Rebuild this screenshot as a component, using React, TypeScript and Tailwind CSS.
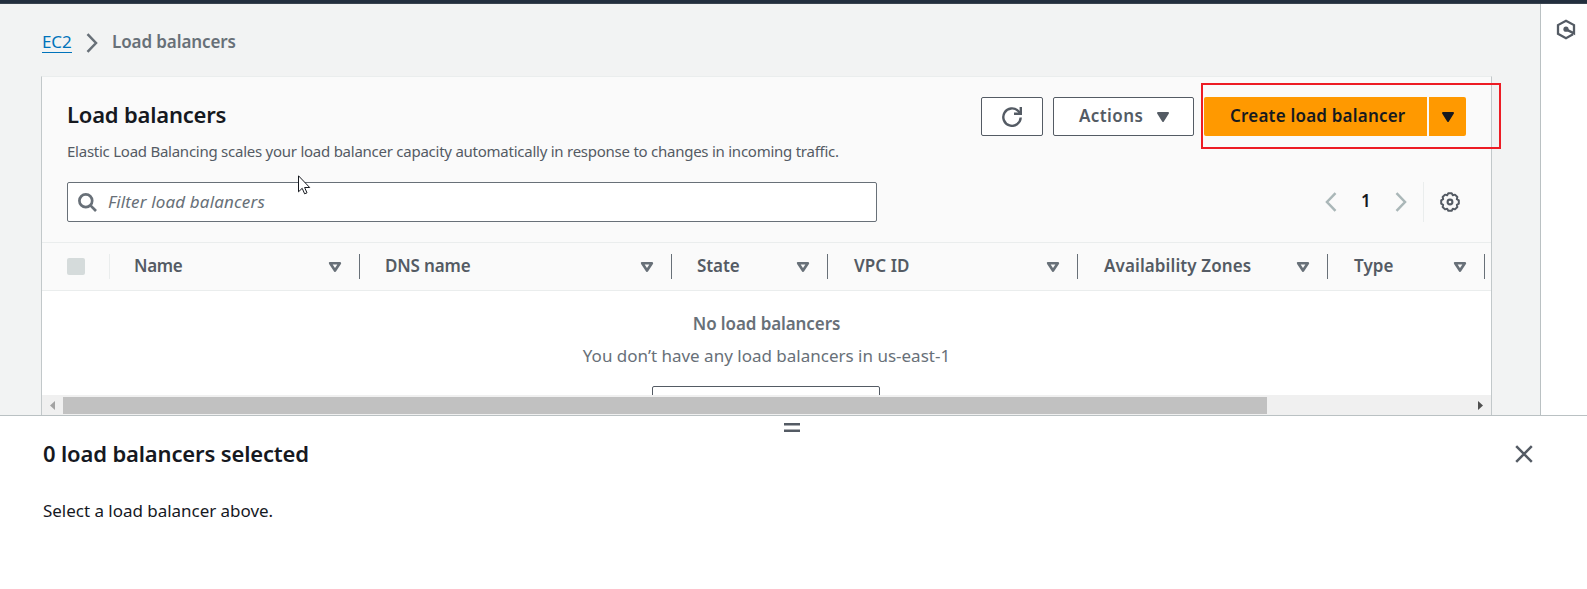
import React from "react";

type Column = { label: string; cell: string; text: string };

const columns: Column[] = [
  { label: "Name", cell: "w-[250px]", text: "-ml-px tracking-[-0.3px]" },
  { label: "DNS name", cell: "w-[312px]", text: "tracking-[-0.15px]" },
  { label: "State", cell: "w-[156px]", text: "tracking-[-0.1px]" },
  { label: "VPC ID", cell: "w-[250px]", text: "ml-px tracking-[0.05px]" },
  { label: "Availability Zones", cell: "w-[250px]", text: "ml-px tracking-[0.1px]" },
  { label: "Type", cell: "w-[157px]", text: "ml-px tracking-[0.1px]" },
];

function Chevron({ className, flip = false }: { className: string; flip?: boolean }) {
  return (
    <svg viewBox="0 0 12 20" className={className} fill="none" stroke="currentColor" strokeWidth="2.5">
      <path d={flip ? "M10.5 1.2 2 10l8.5 8.8" : "M1.5 1.2 10 10l-8.5 8.8"} />
    </svg>
  );
}

function SolidCaret({ className }: { className: string }) {
  return (
    <svg viewBox="0 0 14 12" className={className} fill="currentColor" stroke="currentColor" strokeWidth="2" strokeLinejoin="round">
      <path d="M2 2h10L7 10z" />
    </svg>
  );
}

function SortCaret() {
  return (
    <svg viewBox="0 0 14 12" className="h-3 w-3.5 text-[#687078]" fill="none" stroke="currentColor" strokeWidth="2.7" strokeLinejoin="round">
      <path d="M2.2 2.25h9.6L7 9.5z" />
    </svg>
  );
}

function Breadcrumbs() {
  return (
    <nav className="flex h-[72px] items-center pt-[5px] pl-[42px] text-[17px] leading-6">
      <a className="h-[21px] w-[30px] border-b border-[#0073bb] leading-[19px] tracking-[-0.1px] whitespace-nowrap text-[#0073bb]">EC2</a>
      <Chevron className="ml-3.5 h-5 w-3 text-[#687078]" />
      <span className="-mt-0.5 ml-3.5 font-semibold tracking-[-0.1px] text-[#687078]">Load balancers</span>
    </nav>
  );
}

function HeaderActions() {
  return (
    <div className="relative flex h-[39px] pr-[25px] text-[17px] font-semibold">
      <button className="flex w-[62px] items-center justify-center rounded-[2px] border border-[#545b64] bg-white text-[#545b64]">
        <svg viewBox="0 0 20 20" className="h-5 w-5" fill="none" stroke="currentColor" strokeWidth="2.4">
          <path d="M18.7 10.5A8.7 8.7 0 1 1 16.2 4l2 2.2" />
          <path d="M18.8 0v6.8H12" />
        </svg>
      </button>
      <button className="ml-2.5 flex w-[141px] items-center rounded-[2px] border border-[#545b64] bg-white pl-[25px] text-[#545b64]">
        <span className="-mt-px w-[77px] text-left tracking-[0.4px]">Actions</span>
        <SolidCaret className="h-3 w-3.5" />
      </button>
      <button className="ml-2.5 w-[223px] rounded-l-[2px] bg-[#ff9900] pb-px pl-[26px] text-left tracking-[0.2px] whitespace-nowrap text-[#16191f]">Create load balancer</button>
      <button className="ml-0.5 flex w-[37px] items-center justify-center rounded-r-[2px] bg-[#ff9900] text-[#16191f]">
        <SolidCaret className="h-3 w-3.5" />
      </button>
      <div className="pointer-events-none absolute -top-3.5 -right-2.5 h-[66px] w-[300px] border-2 border-[#ed1c24]" />
    </div>
  );
}

function GearIcon() {
  return (
    <svg viewBox="0 0 20 20" className="h-5 w-5 text-[#545b64]" fill="none" stroke="currentColor">
      <path
        strokeWidth="2"
        strokeLinejoin="round"
        d="M7.17 3.16 8.3 1.2h3.4l1.13 1.96 2.12-.51 2.4 2.4-.51 2.12 1.96 1.13v3.4l-1.96 1.13.51 2.12-2.4 2.4-2.12-.51-1.13 1.96H8.3l-1.13-1.96-2.12.51-2.4-2.4.51-2.12L1.2 11.7V8.3l1.96-1.13-.51-2.12 2.4-2.4z"
      />
      <circle cx="10" cy="10" r="2.4" strokeWidth="2.1" />
    </svg>
  );
}

function FilterBar() {
  return (
    <div className="flex h-10 items-center pl-[25px]">
      <div className="relative flex h-10 w-[810px] items-center rounded-[2px] border border-[#687078] bg-white pl-2.5 text-[#687078]">
        <svg viewBox="0 0 19 19" className="h-[19px] w-[19px]" fill="none" stroke="currentColor" strokeWidth="2.7">
          <circle cx="7.8" cy="7.8" r="6.4" />
          <path d="m12.4 12.4 5.6 5.6" />
        </svg>
        <span className="ml-[11px] text-[17px] tracking-[0.15px] italic">Filter load balancers</span>
        <svg viewBox="0 0 13 20" className="absolute top-[-8px] left-[230px] h-5 w-[13px]" fill="white" stroke="#16191f" strokeWidth="1">
          <path d="M.5.8v16l3.7-3.5 2.4 5.5 2.4-1-2.4-5.3h5.1z" />
        </svg>
      </div>
      <Chevron flip className="ml-[448px] h-5 w-3 text-[#aab7b8]" />
      <span className="-mt-0.5 ml-6 w-[10px] text-[17px] font-semibold text-[#16191f]">1</span>
      <Chevron className="ml-6 h-5 w-3 text-[#aab7b8]" />
      <div className="ml-4 h-10 w-px bg-[#eaeded]" />
      <div className="ml-4">
        <GearIcon />
      </div>
    </div>
  );
}

function TableHead() {
  return (
    <div className="flex h-[49px] shrink-0 items-center overflow-hidden border-y border-[#eaeded]">
      <div className="flex h-[25px] w-[68px] shrink-0 items-center border-r border-[#eaeded] pl-[25px]">
        <div className="h-[17px] w-[18px] rounded-[2px] bg-[#d5dbdb]" />
      </div>
      {columns.map((c) => (
        <div key={c.label} className={`flex h-[25px] shrink-0 items-center justify-between border-r border-[#687078] pr-[17px] pl-[25px] ${c.cell}`}>
          <span className={`-mt-0.5 text-[17px] font-semibold whitespace-nowrap text-[#545b64] ${c.text}`}>{c.label}</span>
          <SortCaret />
        </div>
      ))}
    </div>
  );
}

function EmptyState() {
  return (
    <div className="flex h-[104px] flex-col items-center overflow-hidden bg-white text-[17px] leading-8 text-[#687078]">
      <div className="mt-[17px] font-semibold tracking-[-0.1px]">No load balancers</div>
      <div>You don’t have any load balancers in us-east-1</div>
      <div className="mt-3.5 mr-0.5 h-10 w-[228px] shrink-0 rounded-[2px] border border-[#545b64]" />
    </div>
  );
}

function ScrollBar() {
  return (
    <div className="flex h-5 items-center bg-[#f0f0f0] pr-2 pl-2">
      <svg viewBox="0 0 5 9" className="h-[9px] w-[5px]" fill="#a3a3a3">
        <path d="M5 0v9L0 4.5z" />
      </svg>
      <div className="ml-2 h-[17px] w-[1204px] bg-[#c1c1c1]" />
      <svg viewBox="0 0 5 9" className="ml-auto h-[9px] w-[5px]" fill="#505050">
        <path d="M0 0v9l5-4.5z" />
      </svg>
    </div>
  );
}

function SplitPanel() {
  return (
    <section className="flex h-[174px] shrink-0 flex-col border-t border-[#bac1c3] bg-white text-[#16191f]">
      <div className="flex justify-center pt-[7px]">
        <svg viewBox="0 0 16 9" className="mr-[3px] h-[9px] w-4" fill="none" stroke="#545b64" strokeWidth="2.5">
          <path d="M0 1.25h16M0 7.75h16" />
        </svg>
      </div>
      <div className="flex h-11 items-center justify-between pr-[54px] pl-[43px]">
        <h2 className="-mt-0.5 text-[22px] leading-7 font-semibold tracking-[-0.15px]">0 load balancers selected</h2>
        <svg viewBox="0 0 18 18" className="h-[18px] w-[18px] text-[#545b64]" fill="none" stroke="currentColor" strokeWidth="2.5">
          <path d="m1.2 1.2 15.6 15.6M16.8 1.2 1.2 16.8" />
        </svg>
      </div>
      <p className="mt-[23px] pl-[43px] text-[17px] leading-6 tracking-[-0.03px]">Select a load balancer above.</p>
    </section>
  );
}

export default function App() {
  return (
    <div className="flex h-[589px] w-[1587px] flex-col overflow-hidden bg-[#f2f3f3] font-['Noto_Sans',sans-serif]">
      <header className="h-1 shrink-0 border-b border-[#39434f] bg-[#232f3e]" />
      <div className="flex h-[411px]">
        <main className="flex w-[1540px] flex-col">
          <Breadcrumbs />
          <div className="ml-[41px] flex w-[1451px] flex-1 flex-col border-x border-t border-x-[#c2c8ca] border-t-[#eaeded] bg-[#fafafa]">
            <div className="flex h-[105px] justify-between pl-[25px]">
              <div>
                <h1 className="mt-[23px] text-[22px] leading-7 font-semibold tracking-[-0.2px] text-[#16191f]">Load balancers</h1>
                <p className="mt-[13px] text-[15px] leading-5 tracking-[-0.25px] whitespace-nowrap text-[#545b64]">
                  Elastic Load Balancing scales your load balancer capacity automatically in response to changes in incoming traffic.
                </p>
              </div>
              <div className="pt-5">
                <HeaderActions />
              </div>
            </div>
            <div className="h-[60px]">
              <FilterBar />
            </div>
            <TableHead />
            <EmptyState />
            <ScrollBar />
          </div>
        </main>
        <aside className="flex-1 border-l border-[#bac1c3] bg-white pt-[15px] pl-[15px]">
          <svg viewBox="0 0 20 21" className="h-[21px] w-5 text-[#545b64]" fill="none" stroke="currentColor" strokeWidth="2.3">
            <path d="M17 15.3 10 19.2l-8-4.4V6.1l8-4.4 8 4.4v8.3l-8-4" />
            <circle cx="10" cy="10.2" r="2.6" fill="currentColor" stroke="none" />
          </svg>
        </aside>
      </div>
      <SplitPanel />
    </div>
  );
}
